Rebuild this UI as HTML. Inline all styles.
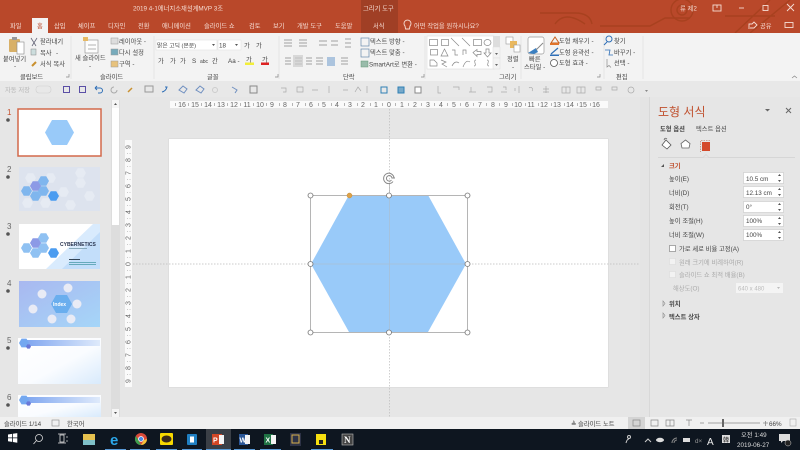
<!DOCTYPE html>
<html><head><meta charset="utf-8"><style>
html,body{margin:0;padding:0;width:800px;height:450px;overflow:hidden;background:#e6e6e6}
svg{display:block;filter:blur(.3px)}
text{font-family:"Liberation Sans","Noto Sans CJK KR",sans-serif;fill:#444;font-size:6.3px}
.w text{fill:#f6ddd4}
.r text{fill:#666;font-size:7px;text-anchor:middle}
.g{fill:none;stroke:#888;stroke-width:.7}
</style></head><body>
<svg width="800" height="450" viewBox="0 0 800 450" xmlns="http://www.w3.org/2000/svg">
<defs>
<symbol id="h" viewBox="-10 -9 20 18" overflow="visible"><polygon points="-10,0 -5,-8.7 5,-8.7 10,0 5,8.7 -5,8.7"/></symbol>
<linearGradient id="g4" x1="0" y1="0" x2="1" y2="1"><stop offset="0" stop-color="#a9b8f0"/><stop offset="1" stop-color="#a5d6f8"/></linearGradient>
<linearGradient id="g5" x1="0" y1="0" x2="1" y2="1"><stop offset="0" stop-color="#fff"/><stop offset=".55" stop-color="#fafcff"/><stop offset="1" stop-color="#d8eafc"/></linearGradient>
<linearGradient id="g6" x1="0" y1="0" x2="1" y2="0"><stop offset="0" stop-color="#7fa6f0"/><stop offset="1" stop-color="#dfeafb"/></linearGradient>
</defs>

<!-- title bar -->
<rect width="800" height="33" fill="#b9482a"/>
<rect x="361" width="37" height="33" fill="#a03f25"/>
<g fill="none" stroke="#a8411f" stroke-width="1.4">
<path d="M540 13H575Q590 13 592 24"/><path d="M555 24Q565 10 585 24"/><path d="M600 26H650L665 18H690"/>
<circle cx="682" cy="10" r="11"/><circle cx="682" cy="10" r="5"/><path d="M735 33L770 0M750 33L790 0M725 16H775"/>
</g>
<g class="w">
<text x="133" y="10.500">2019 4-1에너지소재설계MVP 3조</text>
<text x="10" y="28">파일</text><text x="54" y="28">삽입</text><text x="78" y="28">체이프</text><text x="108" y="28">디자인</text><text x="138" y="28">전환</text><text x="162" y="28">애니메이션</text><text x="204" y="28">슬라이드 쇼</text><text x="249" y="28">검토</text><text x="273" y="28">보기</text><text x="297" y="28">개발 도구</text><text x="335" y="28">도움말</text><text x="373" y="28">서식</text>
<text x="363" y="10.500">그리기 도구</text>
<text x="414" y="28">어떤 작업을 원하시나요?</text>
<text x="680" y="10.500">류 제2</text>
<text x="760" y="28">공유</text>
</g>
<g fill="none" stroke="#f6ddd4" stroke-width=".9">
<path d="M405 26a3.500 3.500 0 1 1 5 0l-.6 3h-3.800z"/>
<rect x="713" y="5" width="8" height="6"/><path d="M717 5v3"/>
<path d="M739 8h5"/><rect x="763" y="5.500" width="5" height="5"/>
<path d="M787 4l7 7M794 4l-7 7"/>
<path d="M749 29v-5h3l2-2 3 3-3 3h-4"/><rect x="785" y="22.500" width="8" height="5"/>
</g>
<rect x="32" y="18" width="16" height="15" fill="#f3f3f3"/>
<text x="37" y="28" style="fill:#b9482a">홈</text>

<!-- ribbon -->
<rect y="33" width="800" height="48" fill="#f3f3f3"/>
<rect y="81" width="800" height="16" fill="#e8e8e8"/>
<path d="M71 36V79M154 36V79M279 36V79M425 36V79M521 36V79M604 36V79M643 36V79" stroke="#e0e0e0" stroke-width=".8"/>
<!-- clipboard -->
<rect x="9" y="39" width="11" height="13" rx="1" fill="#d8b067"/><rect x="12" y="37" width="5" height="3" fill="#999"/><rect x="17" y="42" width="7" height="12" fill="#fff" stroke="#888" stroke-width=".6"/>
<text x="3" y="61">붙여넣기</text><text x="14" y="68">-</text>
<text x="40" y="43.500">잘라내기</text><text x="40" y="55">복사</text><text x="56" y="55">-</text><text x="40" y="66">서식 복사</text>
<path d="M31 38l5 8M37 38l-5 8" stroke="#667" fill="none" stroke-width=".8"/><rect x="31" y="49" width="5" height="6" fill="#cdd" stroke="#888" stroke-width=".5"/><path d="M32 66l4-4" stroke="#c9902f" stroke-width="2"/>
<text x="20" y="79">클립보드</text>
<path class="g" d="M66 77h3v-3M275 77h3v-3M421 77h3v-3M597 77h3v-3"/>
<!-- slides -->
<rect x="85" y="40" width="13" height="13" fill="#fdfdfd" stroke="#999" stroke-width=".7"/><rect x="83" y="37" width="5" height="4" fill="#e7b964"/><path d="M88 45h8M88 49h8" stroke="#999" stroke-width=".7"/>
<text x="75" y="60">새 슬라이드</text><text x="89" y="68">-</text><text x="119" y="43.500">레이아웃 -</text><text x="119" y="54.500">다시 설정</text><text x="119" y="66">구역 -</text>
<rect x="111" y="38" width="7" height="6" fill="#ddd" stroke="#999" stroke-width=".5"/><rect x="111" y="49" width="7" height="6" fill="#7ab" stroke="#999" stroke-width=".5"/><rect x="111" y="61" width="7" height="6" fill="#e7c27d" stroke="#999" stroke-width=".5"/>
<text x="100" y="79">슬라이드</text>
<!-- font -->
<rect x="156" y="40" width="61" height="10" fill="#fff" stroke="#ddd" stroke-width=".5"/><rect x="218" y="40" width="23" height="10" fill="#fff" stroke="#ddd" stroke-width=".5"/>
<text x="157" y="47.500" style="font-size:5.800px">맑은 고딕 (본문)</text><text x="219" y="47.500">18</text><text x="244" y="47.500">가</text><text x="256" y="47.500">가</text>
<path d="M212 44l1.500 2 1.500-2zM235 44l1.500 2 1.500-2z" fill="#555"/>
<text x="158" y="63">가</text><text x="170" y="63">가</text><text x="180" y="63">가</text><text x="192" y="63">S</text><text x="200" y="63" style="font-size:5px">abc</text><text x="212" y="63">간</text><text x="228" y="63">Aa -</text><text x="246" y="61.500">가</text><text x="262" y="61.500">가</text>
<rect x="245" y="62.500" width="9" height="2.500" fill="#f2ee3a"/><rect x="261" y="62.500" width="8" height="2.500" fill="#d22"/>
<text x="207" y="79">글꼴</text>
<!-- paragraph -->
<path class="g" d="M284 40h8M284 43h8M284 46h8M299 40h8M299 43h8M299 46h8M319 41h8M319 45h8M331 41h7M331 45h7M345 39h6M345 43h6M345 47h6M285 58h6M285 61h6M285 64h6M295 58h7M295 61h7M295 64h7M306 58h6M306 61h6M306 64h6M316 58h7M316 61h7M316 64h7M341 58h7M341 61h7M341 64h7"/>
<rect x="293" y="55" width="10" height="12" fill="#ccc" opacity=".7"/><rect x="327" y="57" width="8" height="9" fill="#9ab8d8" opacity=".8"/>
<text x="343" y="79">단락</text>
<text x="370" y="43.500">텍스트 방향 -</text><text x="370" y="54.500">텍스트 맞춤 -</text><text x="369" y="66.500">SmartArt로 변환 -</text>
<rect x="361" y="38" width="8" height="8" fill="none" stroke="#68a" stroke-width=".7"/><rect x="361" y="49" width="8" height="8" fill="none" stroke="#68a" stroke-width=".7"/><rect x="361" y="61" width="7" height="6" fill="#9ba" stroke="#697" stroke-width=".5"/>
<!-- shapes gallery -->
<rect x="427" y="36" width="67" height="33" fill="#fff" stroke="#ddd" stroke-width=".6"/><rect x="493" y="36" width="7" height="11" fill="#ddd"/><rect x="493" y="47" width="7" height="11" fill="#f3f3f3" stroke="#ddd" stroke-width=".5"/><rect x="493" y="58" width="7" height="11" fill="#f3f3f3" stroke="#ddd" stroke-width=".5"/>
<path d="M495 53h3l-1.500 2zM495 64h3l-1.500 2z" fill="#666"/>
<g class="g">
<rect x="429.500" y="39.500" width="8" height="6"/><rect x="441.500" y="39.500" width="7" height="6"/><path d="M451 38l8 8M462 38l8 8"/><rect x="473.500" y="39.500" width="8" height="6"/><ellipse cx="487.500" cy="42.500" rx="3.500" ry="3"/>
<rect x="430.500" y="49.500" width="7" height="5.500"/><path d="M441 56l3.500-7 3.500 7zM452 50h3v5h3M463 55v-5h3v4M473 52.500l4-3v2h4v3h-4v2zM486 49h3v4h2l-3.500 4-3.500-4h2z"/>
<path d="M430 66v-6h4l3 3v3zM441 60l5 2-4 2 5 3M452 66q3-6 7-3M463 67q3-8 7-5M476 60q-2 0-1 3t-1 3M487 60q2 0 1 3t1 3"/>
</g>
<!-- arrange / quick style -->
<rect x="506" y="37" width="7" height="7" fill="#fff" stroke="#999" stroke-width=".6"/><rect x="510" y="41" width="7" height="7" fill="#e9b85f"/><rect x="514" y="45" width="6" height="7" fill="#fff" stroke="#999" stroke-width=".6"/>
<text x="507" y="61">정렬</text><text x="512" y="69">-</text>
<rect x="528" y="37" width="16" height="17" rx="2" fill="#fff" stroke="#999" stroke-width=".7"/><path d="M528 53l8-5 2 4-4 2z" fill="#3a7fc1"/><path d="M536 50l7-7" stroke="#888"/>
<text x="529" y="61">빠른</text><text x="524" y="69">스타일 -</text>
<text x="499" y="79">그리기</text>
<!-- format -->
<path d="M551 43l4-6 4 6z" fill="none" stroke="#c9601f"/><rect x="550" y="43" width="9" height="2" fill="#e0752d"/>
<path d="M551 54l7-6" stroke="#2f6fb7" stroke-width="1.200"/><rect x="550" y="54.500" width="9" height="1.500" fill="#2f6fb7"/><circle cx="554" cy="63" r="3.500" fill="#fff" stroke="#555" stroke-width=".8"/>
<text x="559" y="43">도형 채우기 -</text><text x="559" y="54.500">도형 윤곽선 -</text><text x="559" y="65">도형 효과 -</text>
<circle cx="609" cy="39" r="3" fill="none" stroke="#2f6fb7"/><path d="M607 42l-3 3" stroke="#2f6fb7"/><path d="M605 50h5l-1 5h4" fill="none" stroke="#2f6fb7" stroke-width=".8"/><path d="M607 59v8l2-1.500 2 2" fill="none" stroke="#888" stroke-width=".7"/>
<text x="614" y="43">찾기</text><text x="614" y="54.500">바꾸기 -</text><text x="614" y="65">선택 -</text>
<text x="616" y="79">편집</text>
<path d="M792 78l2.500-2 2.500 2" fill="none" stroke="#888" stroke-width=".7"/>

<!-- QAT -->
<text x="5" y="92" style="fill:#b5b5b5">자동 저장</text><rect x="36" y="86" width="15" height="7" rx="3" fill="none" stroke="#d0d0d0" stroke-width=".6"/>
<g fill="none" stroke-width="1">
<rect x="63.500" y="86.500" width="6" height="6" stroke="#5b4fa6"/><rect x="79.500" y="86.500" width="6" height="6" stroke="#5b4fa6"/>
<path d="M95 88h5a2.500 2.500 0 0 1 0 5h-2M95 88l2-2M95 88l2 2" stroke="#2f6fb7"/><path d="M114 87a3 3 0 1 0 3 3" stroke="#aaa"/>
<path d="M128 92l4-4" stroke="#c9902f" stroke-width="1.500"/><rect x="145" y="86" width="8" height="6" stroke="#999"/><path d="M162 92q4-1 5-5l-2 0" stroke="#2f6fb7"/>
<path d="M179 90l4-4 4 3-3 4zM196 90l4-4 4 3-3 4z" stroke="#6f8fc0"/><circle cx="215" cy="90" r="2.500" stroke="#ccc"/><path d="M232 87l5 3-2 3" stroke="#6f8fc0"/>
<rect x="250" y="86" width="7" height="7" stroke="#888"/>
<path stroke="#aaa" stroke-width=".7" d="M281 88h5v4h-3M297 87h6v5h-6zM312 90h6M329 86v7M343 90h5M355 92l3-5 3 4M367 86v7M438 86v7h3M453 87h6v3M469 92h7M471 87v5M487 87h5v5h-4M501 92h6M503 87h3v3M515 88v3M519 86v7M529 88a2 2 0 0 1 3 3M546 86v7M543 89h6M543 92h6M562 87h8v6h-8zM566 87v6M577 87h8v6h-8zM581 87v6M596 87h5v3h-5zM612 87h5v3h-5zM628 90a3 3 0 1 0 6 0 3 3 0 1 0-6 0"/>
<rect x="381" y="87" width="6" height="6" stroke="#2f7fb5"/><rect x="398" y="87" width="6" height="6" fill="#77a9c9" stroke="#2f7fb5"/><rect x="415" y="87" width="6" height="6" fill="#fff" stroke="#888"/>
<path d="M645 90h3l-1.500 2z" fill="#888" stroke="none"/>
</g>

<!-- left pane -->
<rect x="111" y="100" width="9" height="317" fill="#ddd"/><rect x="112" y="108" width="7" height="117" fill="#fff"/>
<rect x="112" y="100" width="7" height="8" fill="#f5f5f5"/><path d="M114 105l1.500-2 1.500 2z" fill="#555"/><rect x="112" y="409" width="7" height="8" fill="#f5f5f5"/><path d="M114 412l1.500 2 1.500-2z" fill="#555"/>

<text x="7" y="115" style="font-size:8px;fill:#c5512e">1</text>
<text x="7" y="172" style="font-size:8px;fill:#666">2</text>
<text x="7" y="229" style="font-size:8px;fill:#666">3</text>
<text x="7" y="286" style="font-size:8px;fill:#666">4</text>
<text x="7" y="343" style="font-size:8px;fill:#666">5</text>
<text x="7" y="400" style="font-size:8px;fill:#666">6</text>
<g fill="#555"><circle cx="8" cy="120" r="1.800"/><circle cx="8" cy="177" r="1.800"/><circle cx="8" cy="234" r="1.800"/><circle cx="8" cy="291" r="1.800"/><circle cx="8" cy="348" r="1.800"/><circle cx="8" cy="405" r="1.800"/></g>

<!-- thumb 1 -->
<rect x="18" y="109" width="83" height="47" fill="#fff" stroke="#d2694a" stroke-width="1.500"/>
<polygon points="45,132.500 52,120 67,120 74,132.500 67,145 52,145" fill="#99caf9"/>
<!-- thumb 2 -->
<rect x="19" y="167" width="81" height="44" fill="#dde3ee"/>
<g fill="#e6ebf3"><use href="#h" x="25" y="173" width="11" height="10"/><use href="#h" x="45" y="173" width="11" height="10"/><use href="#h" x="75" y="168" width="11" height="10"/><use href="#h" x="75" y="178" width="11" height="10"/><use href="#h" x="84" y="191" width="11" height="10"/><use href="#h" x="65" y="200" width="11" height="10"/><use href="#h" x="22" y="198" width="11" height="10"/><use href="#h" x="40" y="198" width="11" height="10"/><use href="#h" x="58" y="187" width="11" height="10"/></g>
<g fill="#7fb6ee"><use href="#h" x="21" y="186" width="11" height="10"/><use href="#h" x="38" y="176" width="11" height="10"/><use href="#h" x="38" y="186" width="11" height="10"/><use href="#h" x="30" y="191" width="11" height="10"/></g>
<use href="#h" x="30" y="181" width="11" height="10" fill="#8c9ae6"/><use href="#h" x="48" y="191" width="11" height="10" fill="#4b9cf0"/>
<!-- thumb 3 -->
<rect x="19" y="224" width="81" height="45" fill="#fff"/><polygon points="46,269 93,224 100,224 100,269" fill="#d9ebfd"/><polygon points="62,269 100,232 100,269" fill="#c3defa"/>
<g fill="#8fc1f2"><use href="#h" x="21" y="243" width="11" height="10"/><use href="#h" x="38" y="233" width="11" height="10"/><use href="#h" x="38" y="243" width="11" height="10"/><use href="#h" x="30" y="248" width="11" height="10"/></g>
<use href="#h" x="30" y="238" width="11" height="10" fill="#8c9ae6"/><use href="#h" x="48" y="248" width="11" height="10" fill="#4b9cf0"/>
<text x="60" y="246" style="font-size:5px;font-weight:bold;fill:#2a3550">CYBERNETICS</text>
<rect x="69" y="248" width="18" height="1" fill="#8ab"/><rect x="69" y="259" width="11" height="1" fill="#345"/><rect x="69" y="262" width="27" height="1" fill="#6ab"/><rect x="69" y="264" width="27" height="1" fill="#6ab"/>
<!-- thumb 4 -->
<rect x="19" y="281" width="81" height="46" fill="url(#g4)"/>
<polygon points="51,304 56,295 67,295 72,304 67,313 56,313" fill="#6aaeee"/><text x="53" y="306" style="font-size:5px;font-weight:bold;fill:#fff">Index</text>
<g fill="#e9ebf5"><circle cx="42" cy="294" r="4.500"/><circle cx="68" cy="288" r="4.500"/><circle cx="77" cy="304" r="4.500"/><circle cx="33" cy="309" r="4.500"/><circle cx="52" cy="319" r="4.500"/><circle cx="71" cy="319" r="4.500"/></g>
<!-- thumb 5 & 6 -->
<rect x="18" y="338" width="83" height="46" fill="url(#g5)"/><rect x="26" y="340" width="74" height="6" fill="url(#g6)"/><use href="#h" x="19" y="338" width="10" height="10" fill="#74a8f0"/><use href="#h" x="26" y="344" width="5" height="5" fill="#6a78d8"/>
<rect x="18" y="395" width="83" height="22" fill="url(#g5)"/><rect x="26" y="397" width="74" height="6" fill="url(#g6)"/><use href="#h" x="19" y="395" width="10" height="10" fill="#74a8f0"/><use href="#h" x="26" y="401" width="5" height="5" fill="#6a78d8"/>

<!-- horizontal ruler -->
<rect x="170" y="101" width="438" height="7" fill="#fafafa"/>
<g class="r">
<text x="182" y="107">16</text><text x="195" y="107">15</text><text x="208" y="107">14</text><text x="221" y="107">13</text><text x="234" y="107">12</text><text x="247" y="107">11</text><text x="260" y="107">10</text><text x="272" y="107">9</text><text x="285" y="107">8</text><text x="298" y="107">7</text><text x="311" y="107">6</text><text x="324" y="107">5</text><text x="337" y="107">4</text><text x="350" y="107">3</text><text x="363" y="107">2</text><text x="376" y="107">1</text><text x="389" y="107">0</text><text x="402" y="107">1</text><text x="415" y="107">2</text><text x="428" y="107">3</text><text x="441" y="107">4</text><text x="454" y="107">5</text><text x="467" y="107">6</text><text x="480" y="107">7</text><text x="493" y="107">8</text><text x="506" y="107">9</text><text x="518" y="107">10</text><text x="531" y="107">11</text><text x="544" y="107">12</text><text x="557" y="107">13</text><text x="570" y="107">14</text><text x="583" y="107">15</text><text x="596" y="107">16</text>
</g>
<path d="M175.500 103v3M188.500 103v3M201.500 103v3M214.500 103v3M227.500 103v3M240.500 103v3M253.500 103v3M266.500 103v3M279.500 103v3M292.500 103v3M305.500 103v3M318.500 103v3M331.500 103v3M344.500 103v3M357.500 103v3M370.500 103v3M382.500 103v3M395.500 103v3M408.500 103v3M421.500 103v3M434.500 103v3M447.500 103v3M460.500 103v3M473.500 103v3M486.500 103v3M499.500 103v3M512.500 103v3M525.500 103v3M538.500 103v3M551.500 103v3M564.500 103v3M577.500 103v3M590.500 103v3" stroke="#888" stroke-width=".6"/>
<!-- vertical ruler -->
<rect x="125" y="140" width="7" height="247" fill="#fafafa"/>
<g class="r">
<text transform="translate(130.500,147) rotate(-90)">9</text><text transform="translate(130.500,160) rotate(-90)">8</text><text transform="translate(130.500,173) rotate(-90)">7</text><text transform="translate(130.500,186) rotate(-90)">6</text><text transform="translate(130.500,199) rotate(-90)">5</text><text transform="translate(130.500,212) rotate(-90)">4</text><text transform="translate(130.500,225) rotate(-90)">3</text><text transform="translate(130.500,238) rotate(-90)">2</text><text transform="translate(130.500,251) rotate(-90)">1</text><text transform="translate(130.500,264) rotate(-90)">0</text><text transform="translate(130.500,277) rotate(-90)">1</text><text transform="translate(130.500,290) rotate(-90)">2</text><text transform="translate(130.500,303) rotate(-90)">3</text><text transform="translate(130.500,316) rotate(-90)">4</text><text transform="translate(130.500,329) rotate(-90)">5</text><text transform="translate(130.500,342) rotate(-90)">6</text><text transform="translate(130.500,355) rotate(-90)">7</text><text transform="translate(130.500,368) rotate(-90)">8</text><text transform="translate(130.500,381) rotate(-90)">9</text>
</g>
<path d="M126 153.500h5M126 166.500h5M126 179.500h5M126 192.500h5M126 205.500h5M126 218.500h5M126 231.500h5M126 244.500h5M126 257.500h5M126 270.500h5M126 283.500h5M126 296.500h5M126 309.500h5M126 322.500h5M126 335.500h5M126 348.500h5M126 361.500h5M126 374.500h5" stroke="#999" stroke-width=".5" stroke-dasharray="1 1.500" transform="translate(1,0)"/>

<!-- canvas scrollbar strip -->
<rect x="640" y="97" width="10" height="320" fill="#e4e4e4"/>
<rect x="649" y="97" width="1" height="320" fill="#d8d8d8"/>

<!-- slide -->
<rect x="168.500" y="138.500" width="440" height="249" fill="#d6d6d6"/>
<rect x="169" y="139" width="439" height="248" fill="#fff"/>
<path d="M133 264H640" stroke="#bbb" stroke-width=".7" stroke-dasharray="1.500 1.500"/>
<path d="M389.500 109V417" stroke="#bbb" stroke-width=".7" stroke-dasharray="1.500 1.500"/>
<polygon points="311,264 349,195 428,195 466,264 428,332 349,332" fill="#99caf9"/>
<path d="M310.500 264H467M389.500 195V332" stroke="#a9bfd4" stroke-width=".7"/>
<rect x="310.500" y="195.500" width="157" height="137" fill="none" stroke="#b5b5b5" stroke-width="1"/>
<path d="M389.500 183V195" stroke="#b5b5b5" stroke-width=".8"/>
<g fill="#fff" stroke="#777" stroke-width=".8"><circle cx="310.500" cy="195.500" r="2.500"/><circle cx="389" cy="195.500" r="2.500"/><circle cx="467.500" cy="195.500" r="2.500"/><circle cx="310.500" cy="264" r="2.500"/><circle cx="467.500" cy="264" r="2.500"/><circle cx="310.500" cy="332.500" r="2.500"/><circle cx="389" cy="332.500" r="2.500"/><circle cx="467.500" cy="332.500" r="2.500"/></g>
<circle cx="349.500" cy="195.500" r="2.500" fill="#dca24a" stroke="#c98e38" stroke-width=".5"/>
<g fill="none" stroke="#888" stroke-width="1"><path d="M393 181.500a5.200 5.200 0 1 1 1-3.500"/><path d="M391.500 180a2.800 2.800 0 1 1 .5-2h3"/></g>

<!-- right panel -->
<text x="658" y="116" style="font-size:12px;fill:#c0512f">도형 서식</text>
<path d="M765 109l2.500 2.500 2.500-2.500z" fill="#666"/><path d="M786 108l5 5M791 108l-5 5" stroke="#666" fill="none"/>
<text x="660" y="131" style="font-weight:bold">도형 옵션</text><text x="696" y="131">텍스트 옵션</text>
<path d="M662 145l4-5 5 5-4 4z" fill="#fff" stroke="#555" stroke-width=".8"/><path d="M664 140q1-3 3-1" fill="none" stroke="#555" stroke-width=".7"/>
<polygon points="685.500,140 690,143.500 689,148 682,148 681,143.500" fill="#fff" stroke="#666" stroke-width=".8"/>
<rect x="702" y="142" width="8" height="9" fill="#d4492a"/><path d="M700.500 141v11M701 140.500h10" stroke="#b0674e" stroke-width=".6" stroke-dasharray="1.500 1"/>
<path d="M658 157.500H795" stroke="#d6d6d6"/><path d="M703 157.500l3-3 3 3" fill="#e6e6e6" stroke="#d6d6d6" stroke-width=".7"/>
<path d="M661 167l3-3v3z" fill="#555"/>
<text x="669" y="168" style="font-weight:bold;fill:#c0512f">크기</text>
<text x="669" y="181">높이(E)</text><text x="669" y="195">너비(D)</text><text x="669" y="209">회전(T)</text><text x="669" y="223">높이 조절(H)</text><text x="669" y="237">너비 조절(W)</text>
<g fill="#fff" stroke="#c8c8c8" stroke-width=".6"><rect x="743.500" y="172.500" width="40" height="11"/><rect x="743.500" y="186.500" width="40" height="11"/><rect x="743.500" y="201.500" width="40" height="11"/><rect x="743.500" y="215.500" width="40" height="11"/><rect x="743.500" y="229.500" width="40" height="11"/></g>
<text x="746" y="181">10.5 cm</text><text x="746" y="195">12.13 cm</text><text x="746" y="209">0°</text><text x="746" y="223">100%</text><text x="746" y="237">100%</text>
<path d="M778 176l1.500-2 1.500 2zM778 180l1.500 2 1.500-2zM778 190l1.500-2 1.500 2zM778 194l1.500 2 1.500-2zM778 205l1.500-2 1.500 2zM778 209l1.500 2 1.500-2zM778 219l1.500-2 1.500 2zM778 223l1.500 2 1.500-2zM778 233l1.500-2 1.500 2zM778 237l1.500 2 1.500-2z" fill="#555"/>
<rect x="669.500" y="245.500" width="6" height="6" fill="#fff" stroke="#888" stroke-width=".7"/><rect x="669.500" y="258.500" width="6" height="6" fill="#f2f2f2" stroke="#ddd" stroke-width=".7"/><rect x="669.500" y="271.500" width="6" height="6" fill="#f2f2f2" stroke="#ddd" stroke-width=".7"/>
<text x="679" y="251">가로 세로 비율 고정(A)</text>
<text x="679" y="264.500" style="fill:#aaa">원래 크기에 비례하여(R)</text>
<text x="679" y="277" style="fill:#aaa">슬라이드 쇼 최적 배율(B)</text>
<text x="673" y="290.500" style="fill:#aaa">해상도(O)</text>
<rect x="736" y="283" width="47" height="10" fill="#f4f4f4"/><text x="738" y="290.500" style="fill:#bbb;font-size:6px">640 x 480</text><path d="M777 287l1.500 2 1.500-2z" fill="#bbb"/>
<path d="M663 301v5l2-2.500zM663 313v5l2-2.500z" fill="none" stroke="#888" stroke-width=".6"/>
<text x="669" y="306" style="font-weight:bold">위치</text><text x="669" y="319" style="font-weight:bold">텍스트 상자</text>

<!-- status bar -->
<rect y="417" width="800" height="12" fill="#f0f0f0"/>
<text x="4" y="426">슬라이드 1/14</text>
<rect x="52" y="420" width="7" height="6" fill="none" stroke="#888" stroke-width=".6"/>
<text x="67" y="426">한국어</text>
<text x="571" y="426">≜ 슬라이드 노트</text>
<rect x="628" y="417" width="17" height="12" fill="#d4d4d4"/>
<path class="g" d="M633 420h7v6h-7zM651 420h7v6h-7zM666 420h8v6h-8zM670 420v6M686 420h6M689 420v6"/>
<path d="M700 423h4M708 423h52M763 423h5M765.500 421v5" stroke="#888" stroke-width=".8"/><rect x="722" y="419" width="2" height="8" fill="#666"/>
<text x="769" y="426">66%</text><rect x="790" y="419" width="6" height="7" fill="none" stroke="#aaa" stroke-width=".6"/>

<!-- taskbar -->
<rect y="429" width="800" height="21" fill="#0e1620"/>
<path d="M8 434.500l4-.6v3.600H8zM12.800 433.800l4.500-.7v4.400h-4.500zM8 438.300h4v3.600l-4-.6zM12.800 438.300h4.500v4.400l-4.500-.7z" fill="#fff"/>
<circle cx="39" cy="438" r="3.500" fill="none" stroke="#ddd" stroke-width=".8"/><path d="M36.500 440.500l-3 3.500" stroke="#ddd" stroke-width=".8"/>
<rect x="60" y="435" width="4" height="7" fill="none" stroke="#ddd" stroke-width=".8"/><path d="M58 434h8M58 443h8M67 436v2M67 440v2" stroke="#ddd" stroke-width=".7"/>
<rect x="83" y="434" width="12" height="11" fill="#e6c14f"/><rect x="83" y="440" width="12" height="5" fill="#7fc0c8"/>
<text x="110" y="445" style="font-size:15px;font-weight:bold;fill:#2ba6e8">e</text>
<circle cx="141" cy="439" r="6" fill="#d94a3a"/><path d="M141 445a6 6 0 0 1-5.200-9l3 5z" fill="#3ba14f"/><path d="M147 439a6 6 0 0 1-6 6l3-5z" fill="#f3c33a"/><circle cx="141" cy="439" r="2.500" fill="#4a8be8" stroke="#fff" stroke-width=".8"/>
<rect x="160" y="433" width="13" height="12" rx="1" fill="#f7d800"/><ellipse cx="166.500" cy="439" rx="5" ry="3.500" fill="#3a2a1a"/>
<rect x="187" y="434" width="10" height="11" rx="1" fill="#1f7fc2"/><rect x="190" y="436.500" width="4" height="6" fill="#fff"/>
<rect x="206" y="429" width="25" height="21" fill="#3a3f46"/>
<rect x="212" y="434" width="10" height="11" fill="#d24726"/><rect x="219" y="435" width="5" height="9" fill="#f4f4f4"/><text x="213" y="442.500" style="font-size:7px;font-weight:bold;fill:#fff">P</text>
<rect x="239" y="434" width="9" height="11" fill="#2b5797"/><rect x="245" y="435" width="5" height="9" fill="#f4f4f4"/><text x="239.500" y="442.500" style="font-size:7px;font-weight:bold;fill:#fff">W</text>
<rect x="264" y="434" width="9" height="11" fill="#1f7244"/><rect x="271" y="435" width="5" height="9" fill="#f4f4f4"/><text x="265.500" y="442.500" style="font-size:7px;font-weight:bold;fill:#fff">X</text>
<rect x="290" y="433" width="11" height="13" fill="#2d3246"/><rect x="292" y="435" width="7" height="8" fill="none" stroke="#d8b04c"/>
<rect x="316" y="434" width="10" height="11" fill="#f6df10"/><rect x="319" y="440" width="4" height="4" fill="#222"/>
<rect x="342" y="434" width="11" height="11" fill="#444" stroke="#bbb" stroke-width=".6"/><text x="344" y="443" style="font-size:9px;font-weight:bold;fill:#fff;font-family:'Liberation Serif'">N</text>
<g fill="#5a9bd8"><rect x="105" y="449" width="21" height="1"/><rect x="130" y="449" width="20" height="1"/><rect x="156" y="449" width="21" height="1"/><rect x="182" y="449" width="20" height="1"/><rect x="206" y="449" width="25" height="1"/><rect x="234" y="449" width="21" height="1"/><rect x="260" y="449" width="21" height="1"/><rect x="311" y="449" width="22" height="1"/></g>
<circle cx="629" cy="437" r="1.500" fill="none" stroke="#ccc"/><path d="M626 443q1-4 3-4" stroke="#ccc" fill="none"/>
<path d="M645 442l3-3 3 3" fill="none" stroke="#ccc"/><ellipse cx="660" cy="440" rx="4" ry="2.200" fill="#ddd"/><path d="M672 443a5 5 0 0 1 5-5M674 443a3 3 0 0 1 3-3" stroke="#888" fill="none"/><rect x="683" y="438" width="7" height="4" fill="#ddd"/><text x="695" y="443" style="fill:#999">d×</text>
<text x="707" y="445" style="font-size:10px;fill:#eee">A</text><rect x="722" y="435" width="8" height="8" fill="#ddd"/><text x="723" y="442" style="font-size:6px;fill:#222">韓</text>
<text x="741" y="437" style="fill:#ddd">오전 1:49</text><text x="737" y="447" style="fill:#ddd">2019-06-27</text>
<path d="M779 434h11v7h-7l-2 2v-2h-2z" fill="#ddd"/><circle cx="788" cy="443" r="3" fill="#222" stroke="#ccc" stroke-width=".5"/>
</svg>
</body></html>
